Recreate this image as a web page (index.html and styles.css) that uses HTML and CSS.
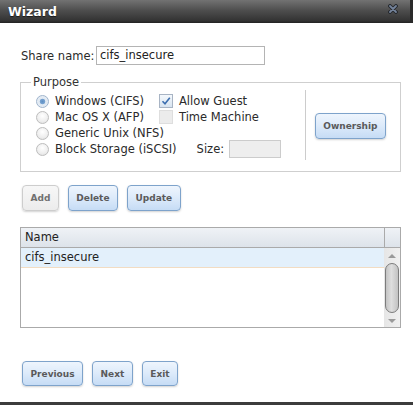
FILE: index.html
```html
<!DOCTYPE html>
<html>
<head>
<meta charset="utf-8">
<link rel="stylesheet" href="styles.css">
</head>
<body>
<div class="dialog">
  <div class="titlebar">
    <span class="title">Wizard</span>
    <span class="close">
      <svg width="10" height="10" viewBox="0 0 10 10">
        <path d="M2 2 L8 8 M8 2 L2 8" stroke="#23262b" stroke-width="3.8" stroke-linecap="round"/>
        <path d="M2 2 L8 8 M8 2 L2 8" stroke="#74839a" stroke-width="1.8" stroke-linecap="round"/>
      </svg>
    </span>
  </div>
  <div class="content">
    <div class="share-row">
      <span class="label">Share name:</span>
      <span class="textbox">cifs_insecure</span>
    </div>

    <fieldset class="purpose">
      <legend>Purpose</legend>
      <div class="purpose-inner">
        <div class="options">
          <div class="row">
            <span class="opt"><span class="radio on"></span>Windows (CIFS)</span>
            <span class="chk"><span class="checkbox checked"><svg width="12" height="12" viewBox="0 0 12 12"><path d="M2.5 6.2 L5 8.8 L9.8 2.8" fill="none" stroke="#3d6fb0" stroke-width="1.6"/></svg></span>Allow Guest</span>
          </div>
          <div class="row">
            <span class="opt"><span class="radio"></span>Mac OS X (AFP)</span>
            <span class="chk"><span class="checkbox disabled"></span>Time Machine</span>
          </div>
          <div class="row">
            <span class="opt"><span class="radio"></span>Generic Unix (NFS)</span>
          </div>
          <div class="row">
            <span class="opt wide"><span class="radio"></span>Block Storage (iSCSI)</span>
            <span class="size-label">Size:</span>
            <span class="size-input"></span>
          </div>
        </div>
        <div class="sep"></div>
        <div class="owner"><span class="btn">Ownership</span></div>
      </div>
    </fieldset>

    <div class="btn-row top-buttons">
      <span class="btn disabled">Add</span>
      <span class="btn">Delete</span>
      <span class="btn">Update</span>
    </div>

    <div class="grid">
      <div class="grid-head">
        <div class="hcell">Name</div>
        <div class="hcorner"></div>
      </div>
      <div class="grid-body">
        <div class="rows">
          <div class="grow selected">cifs_insecure</div>
        </div>
        <div class="scroll">
          <div class="arrow"><span class="tri up"></span></div>
          <div class="thumb"></div>
          <div class="spacer"></div>
          <div class="arrow down-area"><span class="tri down"></span></div>
        </div>
      </div>
    </div>

    <div class="btn-row bottom-buttons">
      <span class="btn">Previous</span>
      <span class="btn">Next</span>
      <span class="btn">Exit</span>
    </div>
  </div>
</div>
</body>
</html>
```

FILE: styles.css
```css
html, body {
  margin: 0;
  padding: 0;
  background: #ffffff;
}
body {
  font-family: "DejaVu Sans", Verdana, sans-serif;
  font-size: 11.5px;
  color: #2a2a2a;
}
.dialog {
  width: 413px;
  height: 405px;
  box-sizing: border-box;
  border-bottom: 3px solid #3c3c3c;
  overflow: hidden;
}
.titlebar {
  height: 23px;
  box-sizing: border-box;
  display: flex;
  align-items: center;
  justify-content: space-between;
  padding: 0 12px 1px 8px;
  background: linear-gradient(to bottom, #727272 0%, #4e4e4e 45%, #333333 90%, #222222 100%);
  border-right: 3px solid #2a2a2a;
}
.title {
  color: #ffffff;
  font-weight: bold;
  font-size: 12.5px;
  text-shadow: 0 1px 1px rgba(0,0,0,0.6);
}
.close {
  display: flex;
  margin-top: -4px;
}
.content {
  padding: 0 12px 0 20px;
}
.share-row {
  display: flex;
  align-items: center;
  margin-top: 23px;
  height: 19px;
  padding-left: 1px;
}
.label {
  width: 75px;
}
.textbox {
  width: 169px;
  height: 19px;
  box-sizing: border-box;
  border: 1px solid #b4b4b4;
  padding: 0 3px;
  line-height: 17px;
  color: #222;
}
.purpose {
  margin: 10px 0 0 0;
  padding: 4px 14px 14px 15px;
  border: 1px solid #cfcfcf;
  min-width: 0;
}
.purpose legend {
  padding: 0 2px;
  margin-left: -5px;
  line-height: 14px;
  color: #333;
}
.purpose-inner {
  display: flex;
}
.options {
  width: 269px;
}
.row {
  display: flex;
  align-items: center;
  height: 16px;
  white-space: nowrap;
}
.opt {
  display: flex;
  align-items: center;
  width: 123px;
}
.opt.wide {
  width: auto;
}
.radio {
  width: 11px;
  height: 11px;
  border-radius: 50%;
  border: 1px solid #bdbdbd;
  background: radial-gradient(circle at 50% 35%, #ffffff 0%, #eeeeee 60%, #dcdcdc 100%);
  margin-right: 6px;
  flex: none;
}
.radio.on {
  border-color: #9fb4cc;
  background: radial-gradient(circle, #5d8fc4 0%, #7aa4d1 32%, #dfe8f2 40%, #eef2f7 100%);
}
.chk {
  display: flex;
  align-items: center;
}
.checkbox {
  width: 12px;
  height: 12px;
  border: 1px solid #a8b4c4;
  background: linear-gradient(to bottom, #f4f8fc, #d8e4f0);
  margin-right: 6px;
  display: flex;
  align-items: center;
  justify-content: center;
  flex: none;
}
.checkbox.disabled {
  border-color: #dedede;
  background: #ececec;
}
.size-label {
  margin-left: 20px;
}
.size-input {
  width: 52px;
  height: 18px;
  box-sizing: border-box;
  margin-left: 5px;
  border: 1px solid #cccccc;
  background: #eeeeee;
}
.sep {
  width: 1px;
  background: #cccccc;
  margin: -3px 0 -3px 0;
}
.owner {
  display: flex;
  align-items: center;
  padding-left: 9px;
  padding-top: 1px;
}
.btn {
  display: inline-flex;
  align-items: center;
  justify-content: center;
  height: 26px;
  box-sizing: border-box;
  padding: 0 7.5px;
  border: 1px solid #7ea3cb;
  border-radius: 4px;
  background: linear-gradient(to bottom, #eef5fd 0%, #dceafa 50%, #c6dcf5 100%);
  box-shadow: 0 1px 2px rgba(0,0,0,0.18);
  font-size: 9px;
  font-weight: bold;
  color: #5a5a5a;
  white-space: nowrap;
}
.btn.disabled {
  border-color: #cdcdcd;
  background: linear-gradient(to bottom, #f7f7f7, #ececec);
  color: #707070;
}
.btn-row {
  display: flex;
  gap: 9px;
  padding-left: 2px;
}
.top-buttons {
  margin-top: 13px;
}
.bottom-buttons {
  margin-top: 33px;
}
.bottom-buttons .btn {
  height: 25px;
}
.grid {
  margin-top: 16px;
  height: 101px;
  box-sizing: border-box;
  border: 1px solid #aaaaaa;
  display: flex;
  flex-direction: column;
}
.grid-head {
  display: flex;
  height: 20px;
  box-sizing: border-box;
  border-bottom: 1px solid #aaaaaa;
  background: linear-gradient(to bottom, #eff2f6, #dde3ea);
}
.hcell {
  flex: 1;
  padding-left: 4px;
  line-height: 19px;
  color: #222;
}
.hcorner {
  width: 15px;
  border-left: 1px solid #aaaaaa;
}
.grid-body {
  flex: 1;
  display: flex;
}
.rows {
  flex: 1;
}
.grow {
  height: 20px;
  box-sizing: border-box;
  padding-left: 4px;
  line-height: 19px;
  color: #222;
}
.grow.selected {
  background: #e3f0fb;
  border-bottom: 1px solid #f2dcc2;
}
.scroll {
  width: 16px;
  background: linear-gradient(to right, #e6e6e6, #f0f0f0);
  display: flex;
  flex-direction: column;
  align-items: center;
}
.arrow {
  height: 15px;
  width: 100%;
  display: flex;
  align-items: center;
  justify-content: center;
}
.down-area {
  height: 13px;
}
.tri {
  width: 0;
  height: 0;
  border-left: 4px solid transparent;
  border-right: 4px solid transparent;
}
.tri.up {
  border-bottom: 4px solid #9a9a9a;
}
.tri.down {
  border-top: 4px solid #9a9a9a;
}
.thumb {
  width: 14px;
  height: 50px;
  box-sizing: border-box;
  border: 1px solid #7c7c7c;
  border-radius: 7px;
  background: linear-gradient(to right, #c4c4c4, #dedede 45%, #c2c2c2);
}
.spacer {
  flex: 1;
}
```
